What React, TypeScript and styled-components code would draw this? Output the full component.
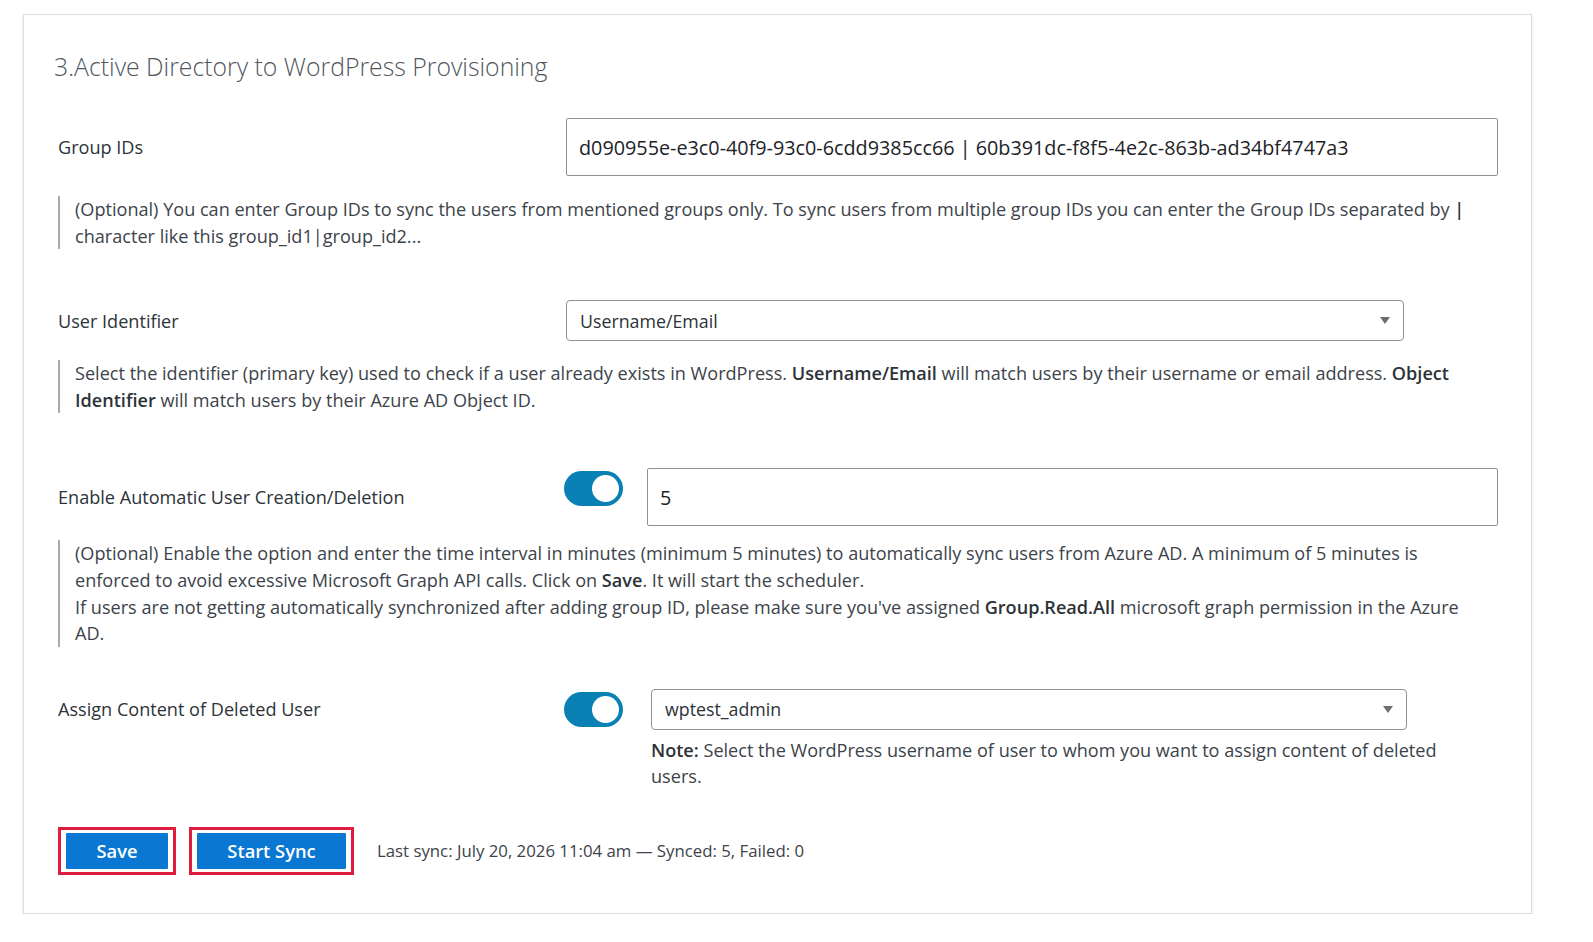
import styled, { createGlobalStyle } from "styled-components";

const GlobalStyle = createGlobalStyle`
    body {
        margin: 0;
        background: #ffffff;
        font-family: "Open Sans", "Noto Sans", sans-serif;
        color: #2c3338;
    }
`;

const Page = styled.div`
    padding: 14px 61px 0 23px;
`;

const Card = styled.section`
    border: 1px solid #dcdcde;
    box-shadow: 0 2px 3px rgba(0, 0, 0, 0.12);
    padding: 34px 33px 38px 30px;
    background: #fff;
`;

const Title = styled.h2`
    margin: 0 0 35px;
    font-size: 24.8px;
    font-weight: 300;
    line-height: 34px;
    color: #50575e;
`;

const Form = styled.div`
    padding-left: 4px;
    display: flex;
    flex-direction: column;
`;

const Row = styled.div<{ $gap?: number }>`
    display: grid;
    grid-template-columns: 508px 1fr;
    align-items: center;
    margin-top: ${(p) => p.$gap ?? 0}px;
`;

const Label = styled.label<{ $top?: boolean }>`
    font-size: 18.1px;
    color: #2c3338;
    ${(p) => (p.$top ? "align-self: start; margin-top: 8px;" : "")}
`;

const Control = styled.div<{ $gap: number }>`
    display: flex;
    align-items: flex-start;
    gap: ${(p) => p.$gap}px;
`;

const TextInput = styled.div`
    flex: 1;
    height: 58px;
    box-sizing: border-box;
    border: 1px solid #8c8f94;
    border-radius: 2px;
    padding: 0 12px;
    display: flex;
    align-items: center;
    font-size: 19.8px;
    color: #1d2327;
    white-space: nowrap;
`;

const Select = styled.div<{ $width: number }>`
    width: ${(p) => p.$width}px;
    height: 41px;
    box-sizing: border-box;
    border: 1px solid #8c8f94;
    border-radius: 4px;
    padding: 0 13px;
    display: flex;
    align-items: center;
    justify-content: space-between;
    font-size: 17.8px;
    color: #2c3338;
`;

const Caret = styled.span`
    width: 0;
    height: 0;
    border-left: 5.5px solid transparent;
    border-right: 5.5px solid transparent;
    border-top: 7px solid #6b6e72;
`;

const Toggle = styled.span<{ $on?: boolean }>`
    flex: none;
    width: 59px;
    height: 35px;
    margin-top: 3px;
    margin-left: -2px;
    border-radius: 18px;
    background: ${(p) => (p.$on ? "#0a81b5" : "#c3c4c7")};
    position: relative;

    &::after {
        content: "";
        position: absolute;
        top: 4px;
        right: ${(p) => (p.$on ? "4px" : "28px")};
        width: 27px;
        height: 27px;
        border-radius: 50%;
        background: #fff;
    }
`;

const Description = styled.p<{ $gap: number }>`
    margin: ${(p) => p.$gap}px 0 0;
    border-left: 2px solid #a7aaad;
    padding: 0 0 0 15px;
    font-size: 18.1px;
    line-height: 26.6px;
    color: #3c434a;
    white-space: nowrap;

    & b {
        font-weight: 600;
        color: #2c3338;
    }
`;

const Stack = styled.div`
    display: flex;
    flex-direction: column;
    width: 756px;
`;

const Note = styled.p`
    margin: 7px 0 0;
    font-size: 18.1px;
    line-height: 26.6px;
    color: #3c434a;
    white-space: nowrap;

    & b {
        font-weight: 600;
        color: #2c3338;
    }
`;

const Actions = styled.div`
    margin-top: 37px;
    display: flex;
    align-items: center;
    gap: 13px;
`;

const Highlight = styled.span`
    display: inline-flex;
    border: 3px solid #e11d3f;
    padding: 3px 5px;
`;

const Button = styled.button<{ $width: number }>`
    width: ${(p) => p.$width}px;
    height: 36px;
    border: none;
    border-radius: 1px;
    background: #0a78d2;
    color: #fff;
    font-family: inherit;
    font-size: 18.3px;
    font-weight: 600;
    cursor: pointer;
`;

const Status = styled.span`
    margin-left: 10px;
    font-size: 16.8px;
    color: #3c434a;
`;

const App = () => {
    return (
        <>
            <GlobalStyle />
            <Page>
                <Card>
                    <Title>3.Active Directory to WordPress Provisioning</Title>
                    <Form>
                        <Row>
                            <Label>Group IDs</Label>
                            <TextInput>
                                d090955e-e3c0-40f9-93c0-6cdd9385cc66 | 60b391dc-f8f5-4e2c-863b-ad34bf4747a3
                            </TextInput>
                        </Row>
                        <Description $gap={20}>
                            (Optional) You can enter Group IDs to sync the users from mentioned groups only. To sync users from multiple group IDs you can enter the Group IDs separated by <b>|</b>
                            <br />
                            character like this group_id1|group_id2...
                        </Description>

                        <Row $gap={51}>
                            <Label>User Identifier</Label>
                            <Select $width={838}>
                                Username/Email
                                <Caret />
                            </Select>
                        </Row>
                        <Description $gap={19}>
                            Select the identifier (primary key) used to check if a user already exists in WordPress. <b>Username/Email</b> will match users by their username or email address. <b>Object</b>
                            <br />
                            <b>Identifier</b> will match users by their Azure AD Object ID.
                        </Description>

                        <Row $gap={55}>
                            <Label>Enable Automatic User Creation/Deletion</Label>
                            <Control $gap={24}>
                                <Toggle $on />
                                <TextInput>5</TextInput>
                            </Control>
                        </Row>
                        <Description $gap={14}>
                            (Optional) Enable the option and enter the time interval in minutes (minimum 5 minutes) to automatically sync users from Azure AD. A minimum of 5 minutes is
                            <br />
                            enforced to avoid excessive Microsoft Graph API calls. Click on <b>Save</b>. It will start the scheduler.
                            <br />
                            If users are not getting automatically synchronized after adding group ID, please make sure you've assigned <b>Group.Read.All</b> microsoft graph permission in the Azure
                            <br />
                            AD.
                        </Description>

                        <Row $gap={42}>
                            <Label $top>Assign Content of Deleted User</Label>
                            <Control $gap={28}>
                                <Toggle $on />
                                <Stack>
                                    <Select $width={756}>
                                        wptest_admin
                                        <Caret />
                                    </Select>
                                    <Note>
                                        <b>Note:</b> Select the WordPress username of user to whom you want to assign content of deleted
                                        <br />
                                        users.
                                    </Note>
                                </Stack>
                            </Control>
                        </Row>

                        <Actions>
                            <Highlight>
                                <Button $width={102}>Save</Button>
                            </Highlight>
                            <Highlight>
                                <Button $width={149}>Start Sync</Button>
                            </Highlight>
                            <Status>Last sync: July 20, 2026 11:04 am — Synced: 5, Failed: 0</Status>
                        </Actions>
                    </Form>
                </Card>
            </Page>
        </>
    );
};

export default App;
